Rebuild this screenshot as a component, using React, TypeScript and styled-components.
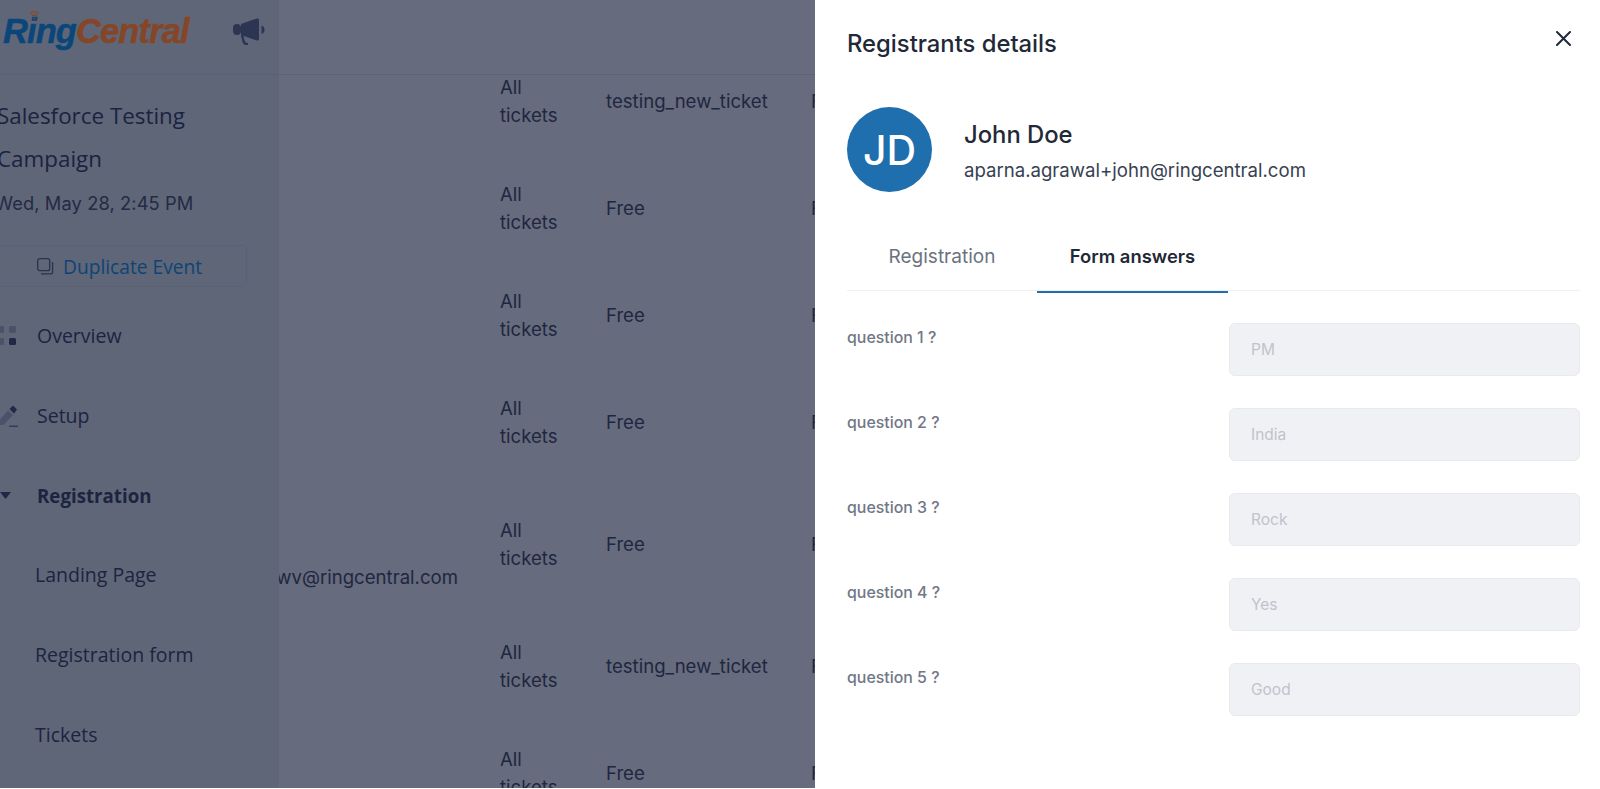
import React from "react";
import styled, { createGlobalStyle } from "styled-components";

const Global = createGlobalStyle`
  html, body { margin: 0; padding: 0; background: #fff; overflow: hidden; }
  * { box-sizing: border-box; }
  body { font-family: Inter, "Liberation Sans", sans-serif; }
`;

const Page = styled.div`
  display: flex;
  width: 1600px;
  height: 788px;
  overflow: hidden;
`;
const Dimmed = styled.div`
  width: 815px;
  flex: none;
  display: flex;
  overflow: hidden;
  background: #666b7d;
  color: #1e2640;
`;
const Sidebar = styled.aside`
  width: 279px;
  flex: none;
  background: #5f6678;
  overflow: hidden;
  font-family: "Open Sans", Inter, sans-serif;
`;
const LogoBar = styled.div`
  height: 75px;
  border-bottom: 1px solid #5a6174;
  display: flex;
  align-items: center;
  padding: 0 0 11px 3px;
  gap: 44px;
`;
const Logo = styled.div`
  position: relative;
  font: italic 700 34.5px/1 "Liberation Sans", Arial, sans-serif;
  letter-spacing: -0.9px;
  -webkit-text-stroke: 0.5px currentColor;
  width: 186px;
  white-space: nowrap;
  color: #0b467a;
  span { color: #854627; }
`;
const LogoWaves = styled.svg`
  position: absolute;
  left: 25px;
  top: -6px;
`;
const EventTitle = styled.h1`
  margin: 19px 0 0 -3px;
  width: 250px;
  font-size: 22.4px;
  line-height: 43px;
  font-weight: 400;
  color: #1a2340;
`;
const EventDate = styled.div`
  margin: 10px 0 0 -5px;
  font: 400 18.3px/26px Inter, sans-serif;
  letter-spacing: 0.1px;
  color: #232b45;
  white-space: nowrap;
`;
const Duplicate = styled.div`
  margin: 29px 0 0 -30px;
  width: 277px;
  height: 42px;
  border: 1px solid #5a6174;
  border-radius: 5px;
  display: flex;
  align-items: center;
  padding-left: 66px;
  gap: 9px;
  font-size: 19.2px;
  color: #0e4475;
`;
const Nav = styled.nav`
  margin-top: 9px;
  display: flex;
  flex-direction: column;
`;
const NavItem = styled.div<{ $bold?: boolean; $child?: boolean }>`
  height: 79.7px;
  display: flex;
  align-items: center;
  font-size: ${(p) => (p.$bold ? "18.7px" : "19.5px")};
  font-weight: ${(p) => (p.$bold ? 700 : 400)};
  color: #1c2440;
  padding-left: ${(p) => (p.$child ? "35px" : "0")};
  white-space: nowrap;
`;
const NavIcon = styled.span`
  width: 37px;
  flex: none;
  display: flex;
  align-items: center;
`;
const Main = styled.main`
  flex: 1;
  min-width: 0;
  display: flex;
  flex-direction: column;
  overflow: hidden;
`;
const MainHeader = styled.div`
  height: 75px;
  flex: none;
  border-bottom: 1px solid #5d6275;
  background: #666b7d;
  position: relative;
  z-index: 1;
`;
const TableBody = styled.div`
  margin-top: -27px;
  font-size: 18.6px;
  color: #1f2740;
`;
const Row = styled.div<{ $tall?: boolean }>`
  height: ${(p) => (p.$tall ? "137px" : "107px")};
  display: grid;
  grid-template-columns: 221px 106px 205px 1fr;
  align-items: center;
  line-height: 27.2px;
`;
const EmailCell = styled.div`
  display: flex;
  justify-content: flex-end;
  overflow: hidden;
  white-space: nowrap;
  padding-right: 42px;
  padding-top: 66px;
`;
const TicketCell = styled.div`
  width: 70px;
`;
const TypeCell = styled.div`
  white-space: nowrap;
`;
const Panel = styled.section`
  flex: 1;
  background: #fff;
  padding: 0 20px 0 32px;
  color: #1b2336;
`;
const PanelHead = styled.div`
  height: 107px;
  display: flex;
  justify-content: space-between;
  padding-top: 28px;
`;
const PanelTitle = styled.h2`
  margin: 0;
  font-size: 23.8px;
  line-height: 32px;
  font-weight: 500;
  color: #1f2937;
`;
const Close = styled.svg`
  margin: 3px 9px 0 0;
`;
const Profile = styled.div`
  display: flex;
  align-items: center;
  gap: 32px;
`;
const Avatar = styled.div`
  width: 85px;
  height: 85px;
  border-radius: 50%;
  background: #1f6fae;
  color: #fff;
  font-size: 41px;
  font-weight: 500;
  display: flex;
  align-items: center;
  justify-content: center;
`;
const ProfileInfo = styled.div`
  padding-top: 3px;
`;
const ProfileName = styled.div`
  font-size: 23.8px;
  line-height: 32px;
  font-weight: 500;
  color: #1f2937;
`;
const ProfileEmail = styled.div`
  font-size: 18.6px;
  line-height: 26px;
  margin-top: 6px;
  color: #374151;
`;
const Tabs = styled.div`
  margin-top: 33px;
  height: 66px;
  border-bottom: 1px solid #eff0f3;
  display: flex;
`;
const Tab = styled.div<{ $active?: boolean }>`
  height: 68px;
  width: ${(p) => (p.$active ? "191px" : "190px")};
  display: flex;
  align-items: center;
  justify-content: center;
  padding-bottom: 4px;
  font-size: ${(p) => (p.$active ? "18.4px" : "19px")};
  font-weight: ${(p) => (p.$active ? 600 : 400)};
  color: ${(p) => (p.$active ? "#1f2937" : "#6b7280")};
  border-bottom: 2px solid ${(p) => (p.$active ? "#1f6fae" : "transparent")};
`;
const Form = styled.div`
  margin-top: 32px;
  display: grid;
  grid-template-columns: 382px 351px;
  row-gap: 32px;
`;
const QuestionLabel = styled.div`
  font-size: 15.9px;
  line-height: 22px;
  font-weight: 500;
  color: #717786;
  padding-top: 4px;
`;
const Answer = styled.div`
  height: 53px;
  background: #f0f1f5;
  border: 1px solid #e8eaef;
  border-radius: 6px;
  display: flex;
  align-items: center;
  padding-left: 21px;
  font-size: 15.5px;
  color: #c0c3cb;
`;

const rows = [
  { type: "testing_new_ticket" },
  { type: "Free" },
  { type: "Free" },
  { type: "Free" },
  { type: "Free", email: "wv@ringcentral.com" },
  { type: "testing_new_ticket" },
  { type: "Free" },
];
const answers = ["PM", "India", "Rock", "Yes", "Good"];

export default function App() {
  return (
    <Page>
      <Global />
      <Dimmed>
        <Sidebar>
          <LogoBar>
            <Logo>
              Ring<span>Central</span>
              <LogoWaves width="14" height="14" viewBox="0 0 14 14" fill="none" stroke="#854627" strokeWidth="1.3">
                <path d="M2 5.5a7 7 0 0 1 9 0" />
                <path d="M3.8 8a4.4 4.4 0 0 1 5.4 0" />
                <circle cx="6.5" cy="10.5" r="1" fill="#854627" stroke="none" />
              </LogoWaves>
            </Logo>
            <svg width="33" height="27" viewBox="0 0 33 27" fill="#2c3552">
              <rect x="0" y="6" width="8" height="11" rx="4" />
              <path d="M8 6 L24 0.5 Q26 0 26 2 V21 Q26 23 24 22.5 L8 17 Z" />
              <path d="M28.5 7.5a4.5 4.5 0 0 1 0 8.5 Z" />
              <path d="M9 17 L10.5 23 Q11 26 15 26.5" fill="none" stroke="#2c3552" strokeWidth="2.4" />
            </svg>
          </LogoBar>
          <EventTitle>Salesforce Testing Campaign</EventTitle>
          <EventDate>Wed, May 28, 2:45 PM</EventDate>
          <Duplicate>
            <svg width="17" height="17" viewBox="0 0 17 17" fill="none" stroke="#26344f" strokeWidth="1.3">
              <rect x="0.7" y="0.7" width="12" height="12" rx="2" />
              <path d="M15.6 4v10.2a1.6 1.6 0 0 1-1.6 1.6H4" />
            </svg>
            <span>Duplicate Event</span>
          </Duplicate>
          <Nav>
            <NavItem>
              <NavIcon>
                <svg width="17" height="19" viewBox="0 0 17 19">
                  <rect x="-3" y="0" width="7" height="7" rx="1.5" fill="#4a5269" />
                  <rect x="9" y="0" width="7" height="7" rx="1.5" fill="#4a5269" />
                  <rect x="-3" y="12" width="7" height="7" rx="1.5" fill="#4a5269" />
                  <rect x="9" y="12" width="7" height="7" rx="1.5" fill="#1f2947" />
                </svg>
              </NavIcon>
              Overview
            </NavItem>
            <NavItem>
              <NavIcon>
                <svg width="18" height="22" viewBox="0 0 18 22">
                  <path d="M0 14.5 L8 5.5 L13 10 L3.5 20 H0 Z" fill="#4a5269" />
                  <path d="M9.5 4 L13 0.5 L17 4.5 L14 8.5 Z" fill="#1f2947" />
                  <rect x="9" y="20.6" width="9" height="1.2" fill="#2c3552" />
                </svg>
              </NavIcon>
              Setup
            </NavItem>
            <NavItem $bold>
              <NavIcon>
                <svg width="11" height="7" viewBox="0 0 11 7">
                  <path d="M0 0 H11 L5.5 7 Z" fill="#1f2947" />
                </svg>
              </NavIcon>
              Registration
            </NavItem>
            <NavItem $child>Landing Page</NavItem>
            <NavItem $child>Registration form</NavItem>
            <NavItem $child>Tickets</NavItem>
          </Nav>
        </Sidebar>
        <Main>
          <MainHeader />
          <TableBody>
            {rows.map((r, i) => (
              <Row key={i} $tall={!!r.email}>
                <EmailCell>{r.email ?? ""}</EmailCell>
                <TicketCell>All tickets</TicketCell>
                <TypeCell>{r.type}</TypeCell>
                <TypeCell>Free</TypeCell>
              </Row>
            ))}
          </TableBody>
        </Main>
      </Dimmed>
      <Panel>
        <PanelHead>
          <PanelTitle>Registrants details</PanelTitle>
          <Close width="15" height="15" viewBox="0 0 15 15" fill="none" stroke="#1f2937" strokeWidth="2" strokeLinecap="round">
            <path d="M1 1 L14 14 M14 1 L1 14" />
          </Close>
        </PanelHead>
        <Profile>
          <Avatar>JD</Avatar>
          <ProfileInfo>
            <ProfileName>John Doe</ProfileName>
            <ProfileEmail>aparna.agrawal+john@ringcentral.com</ProfileEmail>
          </ProfileInfo>
        </Profile>
        <Tabs>
          <Tab>Registration</Tab>
          <Tab $active>Form answers</Tab>
        </Tabs>
        <Form>
          {answers.map((a, i) => (
            <React.Fragment key={a}>
              <QuestionLabel>question {i + 1} ?</QuestionLabel>
              <Answer>{a}</Answer>
            </React.Fragment>
          ))}
        </Form>
      </Panel>
    </Page>
  );
}
